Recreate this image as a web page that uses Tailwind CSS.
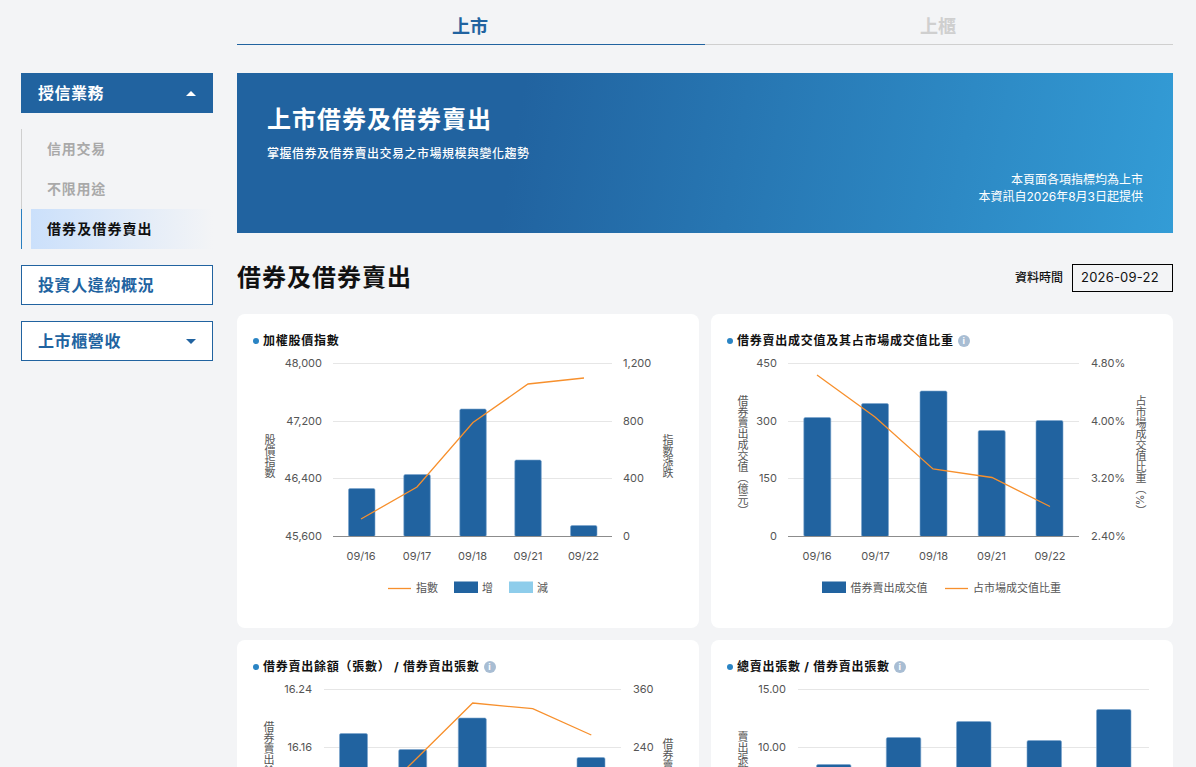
<!DOCTYPE html>
<html lang="zh-Hant">
<head>
<meta charset="utf-8">
<title>上市借券及借券賣出</title>
<script src="https://cdn.jsdelivr.net/npm/@tailwindcss/browser@4"></script>
</head>
<body class="m-0 bg-[#f3f4f6]">
<div class="h-[767px] w-[1196px] overflow-hidden bg-[#f3f4f6] pl-[21px] flex gap-6 [font-family:Inter,'Noto_Sans_CJK_TC',sans-serif]">
  <!-- Sidebar -->
  <aside class="w-[192px] mt-[73px] shrink-0 flex flex-col">
    <div class="h-10 bg-[#2163a0] text-white pl-[17px] pr-[17px] flex items-center justify-between">
      <span class="text-[16px] font-bold tracking-[0.5px]">授信業務</span>
      <span class="w-0 h-0 border-x-[5px] border-x-transparent border-b-[5px] border-b-white"></span>
    </div>
    <ul class="mt-4 flex flex-col">
      <li class="h-10 border-l border-[#cfcfcf] pl-[25px] pb-[2px] flex items-center text-[14px] font-bold tracking-[0.75px] text-[#a9a9a9]">信用交易</li>
      <li class="h-10 border-l border-[#cfcfcf] pl-[25px] pb-[2px] flex items-center text-[14px] font-bold tracking-[0.75px] text-[#a9a9a9]">不限用途</li>
      <li class="h-10 border-l border-[#2a7fc0] pl-[9px]">
        <div class="h-10 pl-4 pb-[2px] flex items-center text-[14px] font-bold tracking-[1.1px] text-[#111] bg-linear-to-r from-[#cbe0fb] to-transparent">借券及借券賣出</div>
      </li>
    </ul>
    <div class="mt-4 h-10 border border-[#2163a0] bg-white text-[#2163a0] pl-4 flex items-center text-[16px] font-bold tracking-[0.6px]">投資人違約概況</div>
    <div class="mt-4 h-10 border border-[#2163a0] bg-white text-[#2163a0] pl-4 pr-4 flex items-center justify-between text-[16px] font-bold tracking-[0.6px]">
      <span>上市櫃營收</span>
      <span class="w-0 h-0 border-x-[5px] border-x-transparent border-t-[5px] border-t-[#2163a0]"></span>
    </div>
  </aside>

  <!-- Main -->
  <main class="w-[936px] shrink-0">
    <div class="grid grid-cols-2 h-[45px]">
      <div class="border-b border-[#2163a0] flex items-center justify-center pt-[8px] pr-[2px] text-[18px] font-bold text-[#2163a0]">上市</div>
      <div class="border-b border-[#cfcfcf] flex items-center justify-center pt-[8px] pr-[2px] text-[18px] font-bold text-[#cfcfcf]">上櫃</div>
    </div>

    <section class="mt-[28px] h-40 relative bg-[linear-gradient(100deg,#2163a0_30%,#339cd6_100%)] text-white pl-[30px] pr-[30px] pt-[31px]">
      <h1 class="text-[24px] leading-[32px] font-bold tracking-[1px]">上市借券及借券賣出</h1>
      <p class="mt-[9px] text-[12px] leading-[17px] font-medium tracking-[0.5px]">掌握借券及借券賣出交易之市場規模與變化趨勢</p>
      <div class="absolute right-[30px] bottom-[28px] text-right text-[12px] leading-[17px]">
        <p>本頁面各項指標均為上市</p>
        <p>本資訊自2026年8月3日起提供</p>
      </div>
    </section>

    <div class="mt-[31px] h-7 flex items-center justify-between">
      <h2 class="text-[24px] font-bold tracking-[1px] text-[#111]">借券及借券賣出</h2>
      <div class="flex items-center gap-[9px]">
        <span class="text-[12px] font-medium text-[#111]">資料時間</span>
        <div class="w-[101px] h-7 border border-black pl-[8px] flex items-center text-[13px] tracking-[0.2px] text-[#111]">2026-09-22</div>
      </div>
    </div>

    <div class="mt-[22px] grid grid-cols-[462px_462px] gap-3">
      <!-- Card 1 -->
      <article class="h-[314px] bg-white rounded-lg overflow-hidden">
        <h3 class="h-[38px] pl-4 pt-[16px] flex items-center gap-1 text-[12px] font-bold tracking-[0.75px] text-[#111]">
          <span class="size-[6px] rounded-full bg-[#2a84c4]"></span><span>加權股價指數</span>
        </h3>
        <svg viewBox="237 352 462 276" width="462" height="276" class="block text-[11px] fill-[#555]">
          <g class="stroke-[#e6e6e6]"><path d="M333 363.5H612M333 421.5H612M333 478.5H612" /></g>
          <g class="fill-[#2163a0] stroke-[#7ba5cd] stroke-[0.6]">
            <rect x="348.500" y="488.500" width="26.500" height="48" rx="1.500"/>
            <rect x="403.800" y="474.500" width="26.500" height="62" rx="1.500"/>
            <rect x="459.800" y="409" width="26.500" height="127.500" rx="1.500"/>
            <rect x="514.800" y="460" width="26.500" height="76.500" rx="1.500"/>
            <rect x="570.500" y="525.500" width="26.500" height="11" rx="1.500"/>
          </g>
          <path d="M333 536.500H612" class="stroke-[#8c8c8c]"/>
          <polyline points="361,519 417,487 473,422.500 528,384 584,378" class="fill-none stroke-[#f7902d] stroke-[1.300]"/>
          <g text-anchor="end"><text x="322" y="367">48,000</text><text x="322" y="425">47,200</text><text x="322" y="482">46,400</text><text x="322" y="540">45,600</text></g>
          <g><text x="623" y="367">1,200</text><text x="623" y="425">800</text><text x="623" y="482">400</text><text x="623" y="540">0</text></g>
          <g text-anchor="middle"><text x="361" y="560">09/16</text><text x="417" y="560">09/17</text><text x="472.500" y="560">09/18</text><text x="528" y="560">09/21</text><text x="583.500" y="560">09/22</text></g>
          <g class="text-[11px] [writing-mode:vertical-rl]" text-anchor="middle"><text x="269" y="456">股價指數</text><text x="667" y="456">指數漲跌</text></g>
          <path d="M388 588.500H411" class="stroke-[#f7902d] stroke-[1.300]"/>
          <rect x="454" y="581.500" width="24" height="11.500" class="fill-[#2163a0]"/>
          <rect x="509" y="581.500" width="24" height="11.500" class="fill-[#8ecdeb]"/>
          <g class="text-[11px]"><text x="416" y="592">指數</text><text x="482" y="592">增</text><text x="537" y="592">減</text></g>
        </svg>
      </article>

      <!-- Card 2 -->
      <article class="h-[314px] bg-white rounded-lg overflow-hidden">
        <h3 class="h-[38px] pl-4 pt-[16px] flex items-center gap-1 text-[12px] font-bold tracking-[0.75px] text-[#111]">
          <span class="size-[6px] rounded-full bg-[#2a84c4]"></span><span>借券賣出成交值及其占市場成交值比重</span>
          <span class="size-3 rounded-full bg-[#a8bdd3] text-white text-[9px] font-bold flex items-center justify-center tracking-normal">i</span>
        </h3>
        <svg viewBox="711 352 462 276" width="462" height="276" class="block text-[11px] fill-[#555]">
          <path d="M788 363.500H1079M788 421.500H1079M788 478.500H1079" class="stroke-[#e6e6e6]"/>
          <g class="fill-[#2163a0] stroke-[#7ba5cd] stroke-[0.6]">
            <rect x="803.800" y="417.500" width="27" height="119" rx="1.500"/>
            <rect x="861.500" y="403.500" width="27" height="133" rx="1.500"/>
            <rect x="920" y="391" width="27" height="145.500" rx="1.500"/>
            <rect x="978.200" y="430.500" width="27" height="106" rx="1.500"/>
            <rect x="1036" y="420.500" width="27" height="116" rx="1.500"/>
          </g>
          <path d="M788 536.500H1079" class="stroke-[#8c8c8c]"/>
          <polyline points="817,375 875,417 933,469 992,477.500 1050,506.500" class="fill-none stroke-[#f7902d] stroke-[1.300]"/>
          <g text-anchor="end"><text x="777" y="367">450</text><text x="777" y="425">300</text><text x="777" y="482">150</text><text x="777" y="540">0</text></g>
          <g><text x="1091" y="367">4.80%</text><text x="1091" y="425">4.00%</text><text x="1091" y="482">3.20%</text><text x="1091" y="540">2.40%</text></g>
          <g text-anchor="middle"><text x="817" y="560">09/16</text><text x="875.500" y="560">09/17</text><text x="933.500" y="560">09/18</text><text x="991.500" y="560">09/21</text><text x="1050" y="560">09/22</text></g>
          <g class="text-[11px] [writing-mode:vertical-rl]" text-anchor="middle"><text x="742" y="456">借券賣出成交值（億元）</text><text x="1140" y="456">占市場成交值比重（%）</text></g>
          <rect x="822" y="581.500" width="24" height="11.500" class="fill-[#2163a0]"/>
          <path d="M945 588.500H968" class="stroke-[#f7902d] stroke-[1.300]"/>
          <g class="text-[11px]"><text x="850.500" y="592">借券賣出成交值</text><text x="973" y="592">占市場成交值比重</text></g>
        </svg>
      </article>

      <!-- Card 3 -->
      <article class="h-[314px] bg-white rounded-lg overflow-hidden">
        <h3 class="h-[38px] pl-4 pt-[16px] flex items-center gap-1 text-[12px] font-bold tracking-[0.75px] text-[#111]">
          <span class="size-[6px] rounded-full bg-[#2a84c4]"></span><span>借券賣出餘額（張數） / 借券賣出張數</span>
          <span class="size-3 rounded-full bg-[#a8bdd3] text-white text-[9px] font-bold flex items-center justify-center tracking-normal">i</span>
        </h3>
        <svg viewBox="237 678 462 276" width="462" height="276" class="block text-[11px] fill-[#555]">
          <path d="M324 689.500H621M324 747.500H621" class="stroke-[#e6e6e6]"/>
          <g class="fill-[#2163a0] stroke-[#7ba5cd] stroke-[0.6]">
            <rect x="339.500" y="733.500" width="28" height="130" rx="1.500"/>
            <rect x="398.700" y="749.500" width="28" height="114" rx="1.500"/>
            <rect x="458.300" y="718" width="28" height="145.500" rx="1.500"/>
            <rect x="577" y="757.500" width="28" height="106" rx="1.500"/>
          </g>
          <polyline points="353,820 413,762 472.700,703 532.700,708.700 591.300,735" class="fill-none stroke-[#f7902d] stroke-[1.300]"/>
          <g text-anchor="end"><text x="312" y="693">16.24</text><text x="312" y="751">16.16</text></g>
          <g><text x="633" y="693">360</text><text x="633" y="751">240</text></g>
          <g class="text-[11px] [writing-mode:vertical-rl]"><text x="268" y="721">借券賣出餘額（張數）</text><text x="667" y="738">借券賣出張數</text></g>
        </svg>
      </article>

      <!-- Card 4 -->
      <article class="h-[314px] bg-white rounded-lg overflow-hidden">
        <h3 class="h-[38px] pl-4 pt-[16px] flex items-center gap-1 text-[12px] font-bold tracking-[0.75px] text-[#111]">
          <span class="size-[6px] rounded-full bg-[#2a84c4]"></span><span>總賣出張數 / 借券賣出張數</span>
          <span class="size-3 rounded-full bg-[#a8bdd3] text-white text-[9px] font-bold flex items-center justify-center tracking-normal">i</span>
        </h3>
        <svg viewBox="711 678 462 276" width="462" height="276" class="block text-[11px] fill-[#555]">
          <path d="M798 689.500H1149M798 747.500H1149" class="stroke-[#e6e6e6]"/>
          <g class="fill-[#2163a0] stroke-[#7ba5cd] stroke-[0.6]">
            <rect x="816.500" y="764.500" width="34.500" height="99" rx="1.500"/>
            <rect x="886.300" y="737.500" width="34.500" height="126" rx="1.500"/>
            <rect x="956.500" y="721.500" width="34.500" height="142" rx="1.500"/>
            <rect x="1027" y="740.500" width="34.500" height="123" rx="1.500"/>
            <rect x="1096.500" y="709.500" width="34.500" height="154" rx="1.500"/>
          </g>
          <g text-anchor="end"><text x="786" y="693">15.00</text><text x="786" y="751">10.00</text></g>
          <g class="text-[11px] [writing-mode:vertical-rl]"><text x="742" y="731">賣出張數</text></g>
        </svg>
      </article>
    </div>
  </main>
</div>
</body>
</html>
